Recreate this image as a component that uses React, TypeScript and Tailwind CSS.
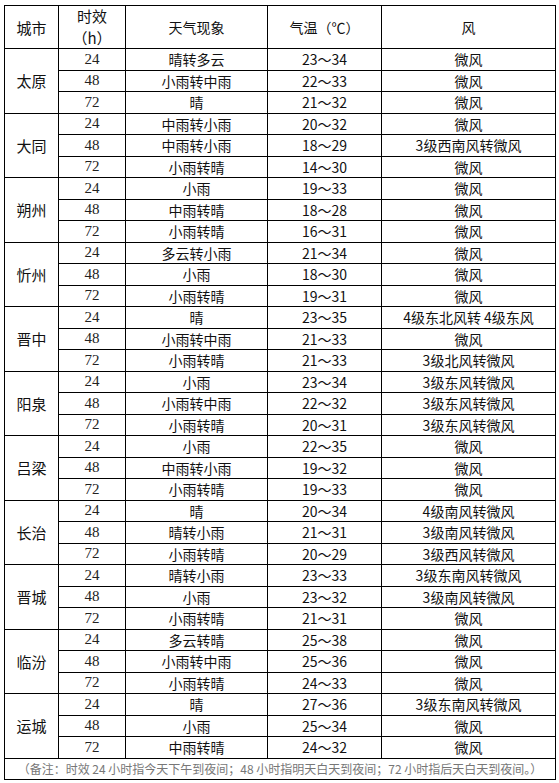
import React from "react";

type Row = [string, string, string, string];
const data: { city: string; rows: Row[] }[] = [
  { city: "太原", rows: [["24", "晴转多云", "23～34", "微风"], ["48", "小雨转中雨", "22～33", "微风"], ["72", "晴", "21～32", "微风"]] },
  { city: "大同", rows: [["24", "中雨转小雨", "20～32", "微风"], ["48", "中雨转小雨", "18～29", "3级西南风转微风"], ["72", "小雨转晴", "14～30", "微风"]] },
  { city: "朔州", rows: [["24", "小雨", "19～33", "微风"], ["48", "中雨转晴", "18～28", "微风"], ["72", "小雨转晴", "16～31", "微风"]] },
  { city: "忻州", rows: [["24", "多云转小雨", "21～34", "微风"], ["48", "小雨", "18～30", "微风"], ["72", "小雨转晴", "19～31", "微风"]] },
  { city: "晋中", rows: [["24", "晴", "23～35", "4级东北风转 4级东风"], ["48", "小雨转中雨", "21～33", "微风"], ["72", "小雨转晴", "21～33", "3级北风转微风"]] },
  { city: "阳泉", rows: [["24", "小雨", "23～34", "3级东风转微风"], ["48", "小雨转中雨", "22～32", "3级东风转微风"], ["72", "小雨转晴", "20～31", "3级东风转微风"]] },
  { city: "吕梁", rows: [["24", "小雨", "22～35", "微风"], ["48", "中雨转小雨", "19～32", "微风"], ["72", "小雨转晴", "19～33", "微风"]] },
  { city: "长治", rows: [["24", "晴", "20～34", "4级南风转微风"], ["48", "晴转小雨", "21～31", "3级南风转微风"], ["72", "小雨转晴", "20～29", "3级西风转微风"]] },
  { city: "晋城", rows: [["24", "晴转小雨", "23～33", "3级东南风转微风"], ["48", "小雨", "23～32", "3级南风转微风"], ["72", "小雨转晴", "21～31", "微风"]] },
  { city: "临汾", rows: [["24", "多云转晴", "25～38", "微风"], ["48", "小雨转中雨", "25～36", "微风"], ["72", "小雨转晴", "24～33", "微风"]] },
  { city: "运城", rows: [["24", "晴", "27～36", "3级东南风转微风"], ["48", "小雨", "25～34", "微风"], ["72", "中雨转晴", "24～32", "微风"]] },
];

const cjk = "font-['Noto_Sans_CJK_SC',sans-serif]";
const base = "border border-black text-center align-middle p-0";
const cell = `${base} leading-none`;

export default function App() {
  return (
    <div className="w-[559px] h-[783px] bg-white pt-[5px] pl-[4px]">
      <table className={`border-collapse table-fixed w-[551px] text-[14px] text-[#111] ${cjk}`}>
        <colgroup>
          <col className="w-[54px]" />
          <col className="w-[67px]" />
          <col className="w-[142px]" />
          <col className="w-[114px]" />
          <col className="w-[174px]" />
        </colgroup>
        <thead>
          <tr className="h-[43px]">
            <th className={`${cell} font-normal text-[15px]`}>城市</th>
            <th className={`${base} font-normal text-[15px]`}>
              <div className="flex flex-col items-center gap-[6px] leading-[16px]">
                <span>时效</span>
                <span>（h）</span>
              </div>
            </th>
            <th className={`${cell} font-normal`}>天气现象</th>
            <th className={`${cell} font-normal`}>气温（℃）</th>
            <th className={`${cell} font-normal`}>风</th>
          </tr>
        </thead>
        <tbody>
          {data.map((g) =>
            g.rows.map((r, i) => (
              <tr key={g.city + i} className="h-[21.5px]">
                {i === 0 && (
                  <td rowSpan={3} className={`${cell} text-[15px]`}>
                    {g.city}
                  </td>
                )}
                <td className={`${cell} font-['Liberation_Serif',serif] text-[15px] text-[#222]`}>{r[0]}</td>
                <td className={cell}>{r[1]}</td>
                <td className={cell}>{r[2]}</td>
                <td className={cell}>{r[3]}</td>
              </tr>
            ))
          )}
          <tr className="h-[21px]">
            <td colSpan={5} className={`${cell} text-[12px] text-[#777]`}>
              （备注：时效 24 小时指今天下午到夜间；48 小时指明天白天到夜间；72 小时指后天白天到夜间。）
            </td>
          </tr>
        </tbody>
      </table>
    </div>
  );
}
